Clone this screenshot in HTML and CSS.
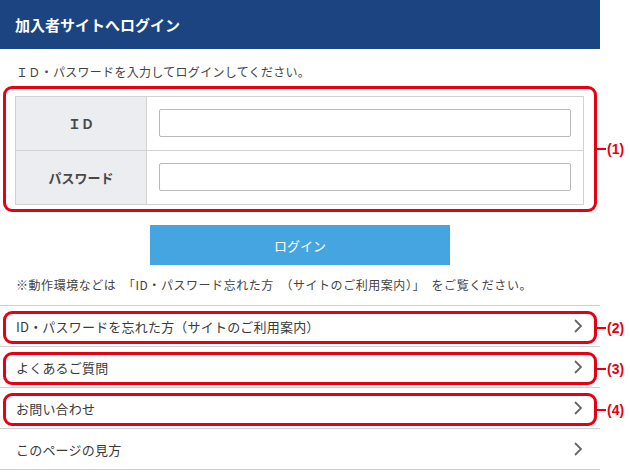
FILE: index.html
```html
<!DOCTYPE html>
<html lang="ja">

<head>
    <meta charset="UTF-8">
    <meta name="viewport" content="width=device-width, initial-scale=1.0">
    <title>加入者サイトへログイン</title>
    <link rel="stylesheet" href="styles.css">
</head>

<body>
    <div class="page">
        <!-- 見出し -->
        <h1 class="page-title">加入者サイトへログイン</h1>

        <p class="lead">ＩＤ・パスワードを入力してログインしてください。</p>

        <!-- ログインフォーム -->
        <div class="login-box">
            <table class="login-table">
                <tr>
                    <th>ＩＤ</th>
                    <td><input type="text" class="login-input"></td>
                </tr>
                <tr>
                    <th>パスワード</th>
                    <td><input type="password" class="login-input"></td>
                </tr>
            </table>
            <span class="mark mark-form"><span class="mark-label">(1)</span></span>
        </div>

        <div class="btn-area">
            <button type="button" class="btn-login">ログイン</button>
        </div>

        <p class="note">※動作環境などは　「ID・パスワード忘れた方　（サイトのご利用案内）」　をご覧ください。</p>

        <!-- リンク一覧 -->
        <ul class="link-list">
            <li>
                <a href="#">ID・パスワードを忘れた方（サイトのご利用案内）
                    <svg class="chevron" viewBox="0 0 10 14" width="10" height="14"><path d="M2 1 L8 7 L2 13" /></svg>
                </a>
                <span class="mark mark-row"><span class="mark-label">(2)</span></span>
            </li>
            <li>
                <a href="#">よくあるご質問
                    <svg class="chevron" viewBox="0 0 10 14" width="10" height="14"><path d="M2 1 L8 7 L2 13" /></svg>
                </a>
                <span class="mark mark-row"><span class="mark-label">(3)</span></span>
            </li>
            <li>
                <a href="#">お問い合わせ
                    <svg class="chevron" viewBox="0 0 10 14" width="10" height="14"><path d="M2 1 L8 7 L2 13" /></svg>
                </a>
                <span class="mark mark-row"><span class="mark-label">(4)</span></span>
            </li>
            <li>
                <a href="#">このページの見方
                    <svg class="chevron" viewBox="0 0 10 14" width="10" height="14"><path d="M2 1 L8 7 L2 13" /></svg>
                </a>
            </li>
        </ul>
    </div>
</body>

</html>
```

FILE: styles.css
```css
/* ページ全体 */
body {
    margin: 0;
    padding: 0;
    background-color: #fff;
    color: #333;
    font-family: "Noto Sans CJK JP", "Noto Sans", sans-serif;
}

.page {
    width: 600px;
}

/* 見出し */
.page-title {
    margin: 0;
    height: 49px;
    line-height: 49px;
    padding-left: 15px;
    background-color: #1c4481;
    color: #fff;
    font-size: 15px;
    font-weight: bold;
}

.lead {
    margin: 0;
    padding: 13px 16px 0;
    line-height: 20px;
    font-size: 12px;
    color: #444;
    letter-spacing: 0.3px;
}

/* ログインフォーム */
.login-box {
    position: relative;
    margin: 14px 16px 0 15px;
}

.login-table {
    width: 100%;
    border-collapse: collapse;
}

.login-table th,
.login-table td {
    border: 1px solid #d2d2d2;
}

.login-table th {
    width: 128px;
    background-color: #ecedf0;
    font-size: 13px;
    font-weight: bold;
    color: #484848;
    text-align: center;
}

.login-table td {
    padding: 12px 12px 13px;
}

.login-input {
    display: block;
    box-sizing: border-box;
    width: 100%;
    height: 28px;
    border: 1px solid #b9b9b9;
    border-radius: 2px;
}

/* ボタン */
.btn-area {
    margin-top: 20px;
    text-align: center;
}

.btn-login {
    width: 300px;
    height: 40px;
    border: none;
    background-color: #45a5e0;
    color: #fff;
    font-family: inherit;
    font-size: 13px;
    cursor: pointer;
}

.note {
    margin: 10px 0 0;
    padding-left: 16px;
    line-height: 20px;
    font-size: 12px;
    color: #444;
    letter-spacing: 0.55px;
    white-space: nowrap;
}

/* リンク一覧 */
.link-list {
    list-style: none;
    margin: 10px 0 0;
    padding: 0;
    border-top: 1px solid #cfcfcf;
}

.link-list li {
    position: relative;
    border-bottom: 1px solid #cfcfcf;
}

.link-list a {
    display: flex;
    justify-content: space-between;
    align-items: center;
    height: 40px;
    padding: 0 17px 0 16px;
    color: #3a3a3a;
    font-size: 13px;
    letter-spacing: 0.2px;
    text-decoration: none;
}

.chevron {
    fill: none;
    stroke: #666;
    stroke-width: 1.8;
}

/* 注釈の赤枠 */
.mark {
    position: absolute;
    border: 3px solid #e60012;
    border-radius: 9px;
    pointer-events: none;
}

.mark-form {
    top: -10px;
    left: -12px;
    right: -13px;
    bottom: -7px;
}

.mark-row {
    top: 5px;
    left: 3px;
    right: 3px;
    bottom: 2px;
}

.mark-label {
    position: absolute;
    left: 100%;
    top: 50%;
    transform: translateY(-50%);
    display: flex;
    align-items: center;
    margin-left: 3px;
    color: #e60012;
    font-family: "Liberation Sans", Arial, sans-serif;
    font-size: 14px;
    font-weight: bold;
    white-space: nowrap;
}

.mark-label::before {
    content: "";
    display: block;
    width: 9px;
    height: 2px;
    margin-right: 1px;
    background-color: #e60012;
}
```
